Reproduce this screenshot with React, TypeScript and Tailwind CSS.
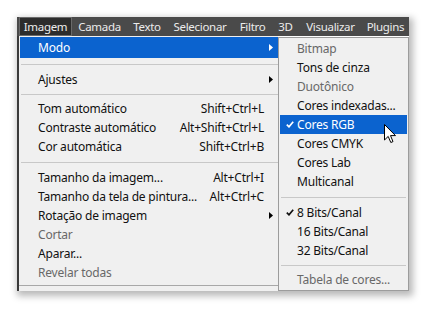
import React from "react";

const font = { fontFamily: '"Noto Sans", "Open Sans", sans-serif' };

function Arrow({ white }: { white?: boolean }) {
  return (
    <svg width="4" height="7" viewBox="0 0 4 7" className="shrink-0">
      <path d="M0 0 L4 3.5 L0 7 Z" fill={white ? "#ffffff" : "#000000"} />
    </svg>
  );
}

function Check({ white }: { white?: boolean }) {
  return (
    <svg width="8" height="7" viewBox="0 0 8 7">
      <path d="M0.8 3.6 L3 5.8 L7.2 0.8" fill="none" stroke={white ? "#ffffff" : "#111111"} strokeWidth="1.7" />
    </svg>
  );
}

type MainItem =
  | { sep: true; h: string }
  | { label: string; sc?: string; arrow?: boolean; gray?: boolean; active?: boolean; h?: string };

const mainItems: MainItem[] = [
  { label: "Modo", arrow: true, active: true, h: "h-[21px]" },
  { sep: true, h: "h-[12px]" },
  { label: "Ajustes", arrow: true },
  { sep: true, h: "h-[10px]" },
  { label: "Tom automático", sc: "Shift+Ctrl+L" },
  { label: "Contraste automático", sc: "Alt+Shift+Ctrl+L" },
  { label: "Cor automática", sc: "Shift+Ctrl+B" },
  { sep: true, h: "h-[12px]" },
  { label: "Tamanho da imagem...", sc: "Alt+Ctrl+I" },
  { label: "Tamanho da tela de pintura...", sc: "Alt+Ctrl+C" },
  { label: "Rotação de imagem", arrow: true },
  { label: "Cortar", gray: true },
  { label: "Aparar..." },
  { label: "Revelar todas", gray: true },
];

type SubItem =
  | { sep: true; h: string }
  | { label: string; gray?: boolean; checked?: boolean; active?: boolean };

const subItems: SubItem[] = [
  { label: "Bitmap", gray: true },
  { label: "Tons de cinza" },
  { label: "Duotônico", gray: true },
  { label: "Cores indexadas..." },
  { label: "Cores RGB", checked: true, active: true },
  { label: "Cores CMYK" },
  { label: "Cores Lab" },
  { label: "Multicanal" },
  { sep: true, h: "h-[12px]" },
  { label: "8 Bits/Canal", checked: true },
  { label: "16 Bits/Canal" },
  { label: "32 Bits/Canal" },
  { sep: true, h: "h-[10px]" },
  { label: "Tabela de cores...", gray: true },
];

const menus: { label: string; w: string }[] = [
  { label: "Imagem", w: "w-[53px]" },
  { label: "Camada", w: "w-[55px]" },
  { label: "Texto", w: "w-[40px]" },
  { label: "Selecionar", w: "w-[66px]" },
  { label: "Filtro", w: "w-[39px]" },
  { label: "3D", w: "w-[27px]" },
  { label: "Visualizar", w: "w-[63px]" },
  { label: "Plugins", w: "w-[47px]" },
];

export default function App() {
  return (
    <div className="w-[426px] h-[309px] bg-white relative overflow-hidden" style={font}>
      <div className="pl-[17px] pt-[17px]">
        <div className="w-[392px] h-[274px] flex flex-col shadow-[2px_3px_7px_2px_rgba(0,0,0,0.28)]">
          {/* menubar */}
          <div className="h-[19px] bg-[#4a4a4a] flex items-stretch pl-[2px] text-[11.5px] tracking-[-0.3px] text-[#ececec]">
            {menus.map((m, i) => (
              <div
                key={m.label}
                className={
                  m.w +
                  " shrink-0 flex items-center justify-center leading-none whitespace-nowrap " +
                  (i === 0 ? "bg-[#2c2c2c] border border-[#6a6a6a]" : "")
                }
              >
                {m.label}
              </div>
            ))}
          </div>
          <div className="flex flex-1 min-h-0 tracking-[-0.2px]">
            {/* main menu */}
            <div className="w-[261px] bg-[#f0f0f0] border-l-2 border-[#3a3a3a] pt-[1px] pl-[1px] flex flex-col text-[12px]">
              {mainItems.map((it, i) =>
                "sep" in it ? (
                  <div key={i} className={it.h + " flex items-center pl-[1px]"}>
                    <div className="h-px w-full bg-[#c8c8c8]" />
                  </div>
                ) : (
                  <div
                    key={i}
                    className={
                      (it.h ?? "h-[19px]") +
                      " flex items-center pl-[18px] pr-[4px] leading-none " +
                      (it.active ? "bg-[#0b63cf] text-white" : it.gray ? "text-[#686868]" : "text-[#111]")
                    }
                  >
                    <span className="flex-1 whitespace-nowrap">{it.label}</span>
                    {it.sc && <span className="whitespace-nowrap pr-[10px]">{it.sc}</span>}
                    {it.arrow && <span className="pr-[1px]"><Arrow white={it.active} /></span>}
                  </div>
                )
              )}
              <div className="mt-[3px] h-px bg-[#a8a8a8] -ml-[1px]" />
            </div>
            {/* submenu */}
            <div className="w-[131px] h-[254px] bg-[#f0f0f0] border border-[#9c9c9c] mt-[1px] p-[1px] flex flex-col text-[12px]">
              {subItems.map((it, i) =>
                "sep" in it ? (
                  <div key={i} className={it.h + " flex items-center px-[1px]"}>
                    <div className="h-px w-full bg-[#c8c8c8]" />
                  </div>
                ) : (
                  <div
                    key={i}
                    className={
                      "h-[19px] shrink-0 flex items-center leading-none " +
                      (it.active ? "bg-[#0b63cf] text-white" : it.gray ? "text-[#686868]" : "text-[#111]")
                    }
                  >
                    <span className="w-[17px] flex justify-center pl-[2px]">
                      {it.checked && <Check white={it.active} />}
                    </span>
                    <span className="whitespace-nowrap">{it.label}</span>
                  </div>
                )
              )}
            </div>
          </div>
        </div>
      </div>
      {/* mouse cursor */}
      <svg className="absolute left-[384px] top-[124px]" width="13" height="20" viewBox="0 0 13 20">
        <path
          d="M0.5 0.5 L0.5 16 L4.2 12.4 L6.8 18.5 L9 17.6 L6.5 11.6 L11.5 11.6 Z"
          fill="#ffffff"
          stroke="#000000"
          strokeWidth="1"
          strokeLinejoin="miter"
        />
      </svg>
    </div>
  );
}
